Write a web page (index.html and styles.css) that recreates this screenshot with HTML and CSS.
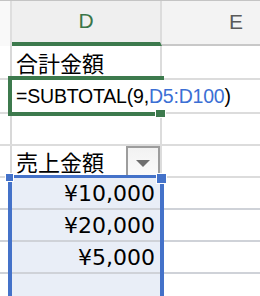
FILE: index.html
```html
<!DOCTYPE html>
<html lang="ja">
  <head>
    <meta charset="UTF-8" />
    <meta name="viewport" content="width=device-width, initial-scale=1.0" />
    <title>SUBTOTAL</title>
    <link rel="stylesheet" href="styles.css">
  </head>
  <body>
    <div class="sheet">
      <div class="row head">
        <div class="stub"></div>
        <div class="col col-d">D</div>
        <div class="col col-e">E</div>
      </div>
      <div class="row r-tall">
        <div class="stub"></div>
        <div class="cell jp">合計金額</div>
        <div class="cell"></div>
      </div>
      <div class="row r-tall">
        <div class="stub"></div>
        <div class="cell formula">=SUBTOTAL(9,<span class="ref">D5:D100</span>)<span class="caret"></span></div>
        <div class="cell"></div>
      </div>
      <div class="row">
        <div class="stub"></div>
        <div class="cell"></div>
        <div class="cell"></div>
      </div>
      <div class="row">
        <div class="stub"></div>
        <div class="cell jp">売上金額<span class="filter-btn"><span class="arrow"></span></span></div>
        <div class="cell"></div>
      </div>
      <div class="row">
        <div class="stub"></div>
        <div class="cell sel num">¥10,000</div>
        <div class="cell"></div>
      </div>
      <div class="row">
        <div class="stub"></div>
        <div class="cell sel num">¥20,000</div>
        <div class="cell"></div>
      </div>
      <div class="row">
        <div class="stub"></div>
        <div class="cell sel num">¥5,000</div>
        <div class="cell"></div>
      </div>
      <div class="row">
        <div class="stub"></div>
        <div class="cell sel"></div>
        <div class="cell"></div>
      </div>

      <!-- active cell and selected range -->
      <div class="active-box"><span class="fill-handle"></span></div>
      <div class="range-box">
        <span class="handle handle-l"></span>
        <span class="handle handle-r"></span>
      </div>
    </div>
  </body>
</html>
```

FILE: styles.css
```css
body {
  margin: 0;
  background: #fff;
  overflow: hidden;
  font-family: "DejaVu Sans", sans-serif;
}
.sheet {
  position: relative;
  width: 260px;
  height: 296px;
  overflow: hidden;
}
.row {
  display: flex;
  height: 30px;
  border-bottom: 2px solid #dcdcdc;
}
.r-tall {
  height: 32px;
}
.stub {
  width: 10px;
  flex-shrink: 0;
  border-right: 2px solid #d8d8d8;
}
.cell {
  width: 150px;
  flex-shrink: 0;
  box-sizing: border-box;
  border-right: 2px solid #dcdcdc;
  display: flex;
  align-items: center;
  padding: 0 4px;
  color: #000;
}
.cell + .cell {
  flex: 1;
  min-width: 0;
  border-right: none;
}
.head {
  height: 45px;
  border-top: 1px solid #c4c4c4;
  border-bottom: none;
  background: #f3f3f3;
}
.head .stub {
  background: #f9f9f9;
  border-right-color: #dedede;
}
.col {
  width: 150px;
  flex-shrink: 0;
  box-sizing: border-box;
  display: flex;
  align-items: center;
  justify-content: center;
  font-family: "Liberation Sans", Arial, sans-serif;
  font-size: 21px;
  border-right: 2px solid #dcdcdc;
  padding-bottom: 2px;
}
.col-d {
  color: #3a7548;
  background: #efefef;
  border-bottom: 4px solid #3d7a4d;
}
.col-e {
  flex: 1;
  min-width: 0;
  justify-content: flex-end;
  padding-right: 17px;
  border-right: none;
  color: #5a5a5a;
  border-bottom: 2px solid #c8c8c8;
}
.jp {
  font-family: "Noto Sans CJK JP", sans-serif;
  font-size: 22px;
}
.formula {
  font-family: "Liberation Sans", Arial, sans-serif;
  font-size: 19.5px;
  letter-spacing: -0.2px;
  white-space: nowrap;
  overflow: visible;
  border-right-color: transparent;
  position: relative;
  z-index: 2;
}
.ref {
  color: #3b6fd4;
}
.caret {
  display: inline-block;
  width: 1px;
  height: 24px;
  margin-left: 3px;
  background: #9a9a9a;
}
.num {
  justify-content: flex-end;
  font-size: 22px;
  padding-right: 5px;
}
.sel {
  background: #e9eef7;
}
.row:has(.sel) {
  border-bottom-color: #cfd2d8;
}
.filter-btn {
  margin-left: auto;
  margin-right: -4px;
  align-self: stretch;
  width: 30px;
  border: 2px solid #9d9d9d;
  border-bottom: none;
  background: linear-gradient(#f2f2f2, #fbfbfb);
  display: flex;
  align-items: center;
  justify-content: center;
}
.arrow {
  width: 0;
  height: 0;
  border-left: 7px solid transparent;
  border-right: 7px solid transparent;
  border-top: 7px solid #6f6f6f;
  margin-top: 2px;
}
.active-box {
  position: absolute;
  left: 8px;
  top: 76px;
  width: 156px;
  height: 40px;
  box-sizing: border-box;
  border: 4px solid #3d7a4d;
  border-right: none;
}
.fill-handle {
  position: absolute;
  right: -2px;
  bottom: -6px;
  width: 9px;
  height: 7px;
  background: #3d7a4d;
  border: 1px solid #fff;
  border-top: none;
}
.range-box {
  position: absolute;
  left: 8px;
  top: 175px;
  width: 156px;
  height: 140px;
  box-sizing: border-box;
  border: 4px solid #4472c9;
  border-top-width: 3px;
}
.handle {
  position: absolute;
  width: 9px;
  height: 9px;
  background: #4472c9;
  border: 1px solid #fff;
}
.handle-l {
  left: -7px;
  top: -5px;
  width: 7px;
  height: 7px;
}
.handle-r {
  right: -7px;
  top: -5px;
}
```
